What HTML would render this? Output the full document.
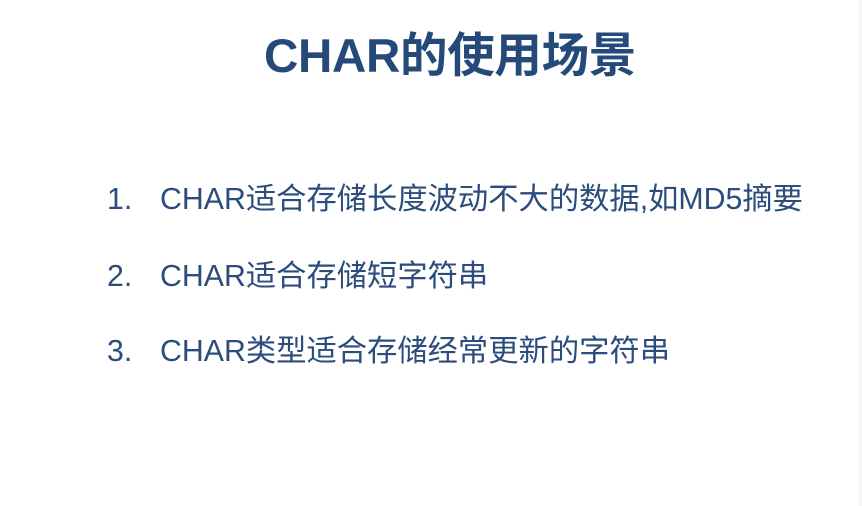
<!DOCTYPE html>
<html><head><meta charset="utf-8"><style>
html,body{margin:0;padding:0;}
body{width:862px;height:506px;background:#fff;position:relative;overflow:hidden;font-family:"Liberation Sans","Noto Sans CJK SC",sans-serif;}
.t{position:absolute;left:0;width:900px;text-align:center;top:26px;font-size:47.5px;font-weight:bold;color:#254a7a;line-height:62px;letter-spacing:-0.3px;}
.l{position:absolute;left:107px;font-size:30.3px;color:#2b4c7c;line-height:40px;white-space:nowrap;}
.l span{display:inline-block;width:53px;}
.edge{position:absolute;right:0;top:0;width:3px;height:506px;background:#f6f6f6;}
</style></head><body>
<div class="t">CHAR的使用场景</div>
<div class="l" style="top:180px"><span>1.</span>CHAR适合存储长度波动不大的数据,如MD5摘要</div>
<div class="l" style="top:257px"><span>2.</span>CHAR适合存储短字符串</div>
<div class="l" style="top:332px"><span>3.</span>CHAR类型适合存储经常更新的字符串</div>
<div class="edge"></div>
</body></html>
